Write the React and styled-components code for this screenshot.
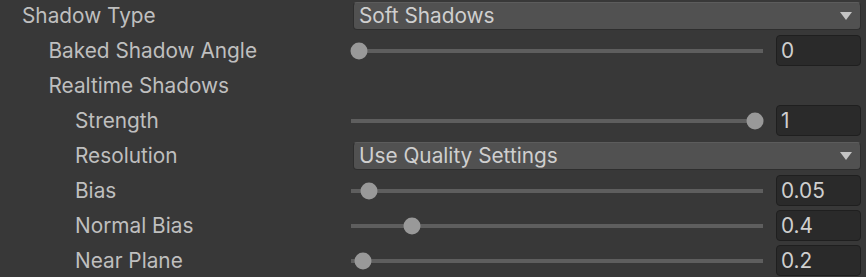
import React from 'react';
import styled, { createGlobalStyle } from 'styled-components';

const GlobalStyle = createGlobalStyle`
  html, body {
    margin: 0;
    padding: 0;
    background: #383838;
    overflow: hidden;
  }
  body {
    font-family: Inter, "Noto Sans", sans-serif;
  }
`;

const rows = [
  { label: 'Shadow Type', level: 0, kind: 'dropdown', value: 'Soft Shadows' },
  { label: 'Baked Shadow Angle', level: 1, kind: 'slider', value: '0', min: 0, max: 90 },
  { label: 'Realtime Shadows', level: 1, kind: 'none' },
  { label: 'Strength', level: 2, kind: 'slider', value: '1', min: 0, max: 1 },
  { label: 'Resolution', level: 2, kind: 'dropdown', value: 'Use Quality Settings' },
  { label: 'Bias', level: 2, kind: 'slider', value: '0.05', min: 0, max: 2 },
  { label: 'Normal Bias', level: 2, kind: 'slider', value: '0.4', min: 0, max: 3 },
  { label: 'Near Plane', level: 2, kind: 'slider', value: '0.2', min: 0.1, max: 10 },
];

function App() {
  return (
    <>
      <GlobalStyle />
      <Panel>
        {rows.map(row => {
          const t = (parseFloat(row.value) - row.min) / (row.max - row.min);
          return (
            <Row key={row.label}>
              <Label $level={row.level}>{row.label}</Label>
              <Control>
                {row.kind === 'dropdown' && (
                  <Dropdown>
                    <span>{row.value}</span>
                    <Arrow />
                  </Dropdown>
                )}
                {row.kind === 'slider' && (
                  <>
                    <Track>
                      <Thumb style={{ left: `calc(8px + ${t} * (100% - 16px))` }} />
                    </Track>
                    <NumberField>{row.value}</NumberField>
                  </>
                )}
              </Control>
            </Row>
          );
        })}
      </Panel>
    </>
  );
}

export default App;

const Panel = styled.div`
  width: 866px;
  margin-top: -2px;
  display: flex;
  flex-direction: column;
`;

const Row = styled.div`
  display: flex;
  align-items: center;
  height: 35px;
`;

const Label = styled.div`
  width: 351px;
  box-sizing: border-box;
  padding-left: ${p => 22 + p.$level * 26.5}px;
  font-size: 20.8px;
  color: #bfbfbf;
  white-space: nowrap;
`;

const Control = styled.div`
  flex: 1;
  display: flex;
  align-items: center;
  padding-right: 5px;
`;

const Dropdown = styled.div`
  flex: 1;
  margin-left: 2px;
  height: 28px;
  box-sizing: border-box;
  display: flex;
  align-items: center;
  justify-content: space-between;
  padding: 0 8px 0 5px;
  background: #515151;
  border: 1px solid #2e2e2e;
  border-top-color: #5c5c5c;
  border-radius: 4px;
  font-size: 20.8px;
  color: #cfcfcf;
`;

const Arrow = styled.div`
  width: 0;
  height: 0;
  border-left: 6.5px solid transparent;
  border-right: 6.5px solid transparent;
  border-top: 8px solid #c4c4c4;
`;

const Track = styled.div`
  position: relative;
  flex: 1;
  height: 4px;
  margin-right: 13px;
  background: #5e5e5e;
`;

const Thumb = styled.div`
  position: absolute;
  top: 50%;
  width: 17px;
  height: 17px;
  border-radius: 50%;
  background: #999999;
  transform: translate(-50%, -50%);
`;

const NumberField = styled.div`
  width: 85px;
  height: 31px;
  box-sizing: border-box;
  padding-left: 4px;
  display: flex;
  align-items: center;
  background: #2a2a2a;
  border: 1px solid #1f1f1f;
  border-radius: 4px;
  font-size: 20.8px;
  color: #cfcfcf;
`;
